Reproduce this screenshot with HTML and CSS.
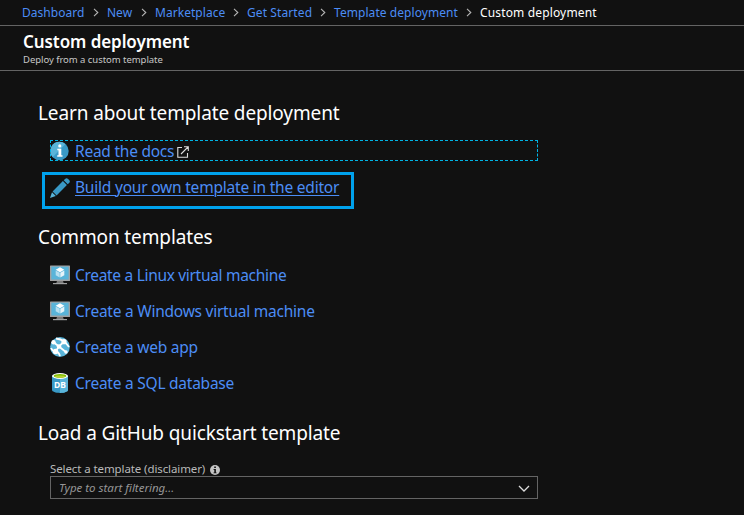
FILE: index.html
```html
<!DOCTYPE html>
<html lang="en">
<head>
<meta charset="utf-8">
<title>Custom deployment</title>
<link rel="stylesheet" href="styles.css">
</head>
<body>
<svg class="defs" width="0" height="0" aria-hidden="true">
  <symbol id="chev" viewBox="0 0 6 9"><path d="M1 .8 4.8 4.5 1 8.2" fill="none" stroke="#b4b4b4" stroke-width="1.1"/></symbol>
  <symbol id="vm" viewBox="0 0 20 20">
    <path d="M7 16h6l.7 2H6.300z" fill="#7a7a7a"/><path d="M3 18h14v1.200H3z" fill="#a0a1a2"/>
    <rect x="0" y="0.500" width="20" height="15.500" rx=".6" fill="#a0a1a2"/><rect x="1.400" y="1.700" width="17.200" height="12.800" fill="#59b4d9"/>
    <path d="M10 2.300 14.300 4.800 10 7.200 5.700 4.800z" fill="#fff"/><path d="M5.700 5.500 9.700 7.800v4.800L5.700 10.300z" fill="#b7dff0"/><path d="M14.300 5.500v4.800l-4 2.300V7.800z" fill="#e6f4fa"/>
  </symbol>
</svg>
<nav class="crumbs">
  <a class="c1">Dashboard</a><svg><use href="#chev"/></svg>
  <a class="c2">New</a><svg><use href="#chev"/></svg>
  <a class="c3">Marketplace</a><svg><use href="#chev"/></svg>
  <a class="c4">Get Started</a><svg><use href="#chev"/></svg>
  <a class="c5">Template deployment</a><svg><use href="#chev"/></svg>
  <span class="c6">Custom deployment</span>
</nav>
<header class="head">
  <h1>Custom deployment</h1>
  <p>Deploy from a custom template</p>
</header>
<main>
  <section class="learn">
    <h2>Learn about template deployment</h2>
    <div class="row focus">
      <svg class="ico" viewBox="0 0 20 20"><circle cx="9.500" cy="10" r="9.200" fill="#3999c6"/><path d="M9.500.8a9.200 9.200 0 0 0-6.800 15.400L15.500 3A9.200 9.200 0 0 0 9.500.8z" fill="#59b4d9"/><circle cx="9.800" cy="4.900" r="1.600" fill="#fff"/><path d="M7.300 7.800h4v6.500h1.200v1.500H7.200v-1.500h1.300V9.300H7.300z" fill="#fff"/></svg>
      <a>Read the docs</a>
      <svg class="ext" viewBox="0 0 12 12"><path d="M5 1.500H.8v9.800H10.500V7M7 .8h4.300V5M11 1 4 8" fill="none" stroke="#ddd" stroke-width="1.100"/></svg>
    </div>
    <div class="row marked">
      <svg class="ico" viewBox="0 0 20 20"><path d="M0 20 2 14.200 5.800 18z" fill="#59b4d9"/><path d="M2.600 13.400 12.900 3.100l4 4L6.600 17.400z" fill="#3999c6"/><path d="m13.700 2.300 1.400-1.400q1.400-1.400 3 0l1 1q1.500 1.500 0 3l-1.400 1.400z" fill="#3999c6"/></svg>
      <a>Build your own template in the editor</a>
    </div>
  </section>
  <section class="common">
    <h2>Common templates</h2>
    <div class="row linux"><svg class="ico"><use href="#vm"/></svg><a>Create a Linux virtual machine</a></div>
    <div class="row"><svg class="ico"><use href="#vm"/></svg><a>Create a Windows virtual machine</a></div>
    <div class="row"><svg class="ico" viewBox="0 0 20 20"><circle cx="10" cy="10" r="9.900" fill="#59b4d9"/><g fill="none" stroke="#fff" stroke-width="1.800"><path d="M2.500 4.500 9 9.500 14 4.500M9 9.500 5.500 14.500M9 9.500l7.500 6"/><path d="M6 1.500Q11 2 14 4.500T19 10M1 11q1 3 4.500 3.500T10 19"/></g><g fill="#fff"><circle cx="9" cy="9.500" r="2.300"/><circle cx="14" cy="4.700" r="2.600"/><circle cx="5.500" cy="14.500" r="2.700"/><circle cx="16" cy="15" r="1.700"/><circle cx="3.500" cy="5.200" r="2.200"/></g></svg><a>Create a web app</a></div>
    <div class="row"><svg class="ico" viewBox="0 0 20 20"><path d="M2 3v14c0 1.600 3.600 2.900 8 2.900s8-1.300 8-2.900V3z" fill="#3999c6"/><path d="M10 3h8v14c0 1.600-3.600 2.900-8 2.900z" fill="#59b4d9"/><ellipse cx="10" cy="3" rx="8" ry="2.900" fill="#fff"/><ellipse cx="10" cy="2.900" rx="6.300" ry="1.900" fill="#7fba00"/><ellipse cx="10" cy="3.500" rx="4.800" ry="1.100" fill="#b8d432"/><text x="10" y="15" text-anchor="middle" class="db">DB</text></svg><a>Create a SQL database</a></div>
  </section>
  <section class="load">
    <h2>Load a GitHub quickstart template</h2>
    <div class="label"><span>Select a template (disclaimer)</span><svg viewBox="0 0 10 10"><circle cx="5" cy="5" r="5" fill="#c3c3c3"/><path d="M4.200 1.600h1.700v1.500H4.200zM3.600 4h2.300v3.400h.7v.9H3.500v-.9h.8V4.900h-.7z" fill="#111"/></svg></div>
    <div class="select"><span>Type to start filtering...</span><svg viewBox="0 0 12 8"><path d="m1 1 5 5 5-5" fill="none" stroke="#ddd" stroke-width="1.300"/></svg></div>
  </section>
</main>
</body>
</html>
```
FILE: styles.css
```css
* { box-sizing: border-box; }
body { margin: 0; width: 744px; height: 515px; overflow: hidden; background: #111; color: #fff; font-family: "Noto Sans", "Open Sans", sans-serif; white-space: nowrap; }
.defs { display: block; }
a { color: #4c8df5; }
.crumbs { display: flex; align-items: center; height: 26px; padding-left: 22px; border-bottom: 1px solid #646464; font-size: 12px; line-height: 24px; }
.crumbs svg { width: 6px; height: 9px; margin: 0 8px; flex: none; }
.c1 { width: 63px; letter-spacing: .03px; }
.c2 { width: 26px; letter-spacing: 0; }
.c3 { width: 70px; letter-spacing: .04px; }
.c4 { width: 65px; letter-spacing: .1px; }
.c5 { width: 124px; letter-spacing: .06px; }
.c6 { letter-spacing: .15px; }
.head { height: 45px; padding: 4px 0 0 23px; border-bottom: 1px solid #646464; }
h1 { margin: 0; font-size: 17px; line-height: 24px; font-weight: 600; letter-spacing: -.08px; }
.head p { margin: 0; font-size: 9.500px; line-height: 11px; letter-spacing: -.04px; color: #c8c8c8; }
main { padding-left: 38px; }
h2 { margin: 0; font-size: 19px; line-height: 28px; font-weight: 400; letter-spacing: -.12px; }
.row { display: flex; align-items: center; width: 488px; height: 22px; margin: 0 0 14px 12px; font-size: 15.500px; line-height: 22px; letter-spacing: -.24px; }
.linux { letter-spacing: -.31px; }
.ico { width: 20px; height: 20px; margin-right: 5px; flex: none; }
.learn { padding-top: 28px; height: 152px; }
.learn h2 { margin-bottom: 13px; }
.focus { height: 21px; margin-bottom: 11px; outline: 1px dashed #00b4e6; outline-offset: -1px; }
.ext { width: 12px; height: 12px; margin: 2px 0 0 3px; }
.marked { width: 312px; height: 37px; margin: 0 0 0 4px; padding: 0 0 5px 5px; border: 3px solid #00a2ed; letter-spacing: -.21px; }
.marked a { margin-bottom: 2px; text-decoration: underline; text-underline-offset: 2px; text-decoration-thickness: 1px; }
.common h2 { margin-bottom: 13px; }
.db { fill: #fff; font-size: 8.500px; font-weight: 700; letter-spacing: 0; }
.load { padding-top: 11px; }
.load h2 { margin-bottom: 14px; }
.label { display: flex; align-items: center; height: 15px; margin-left: 12px; font-size: 11.500px; letter-spacing: -.1px; color: #b9b9b9; }
.label svg { width: 10px; height: 10px; margin: 2px 0 0 5px; }
.select { display: flex; align-items: center; justify-content: space-between; width: 488px; height: 23px; margin-left: 12px; padding: 0 7px 0 8px; border: 1px solid #646464; font-size: 11.500px; font-style: italic; color: #969696; }
.select svg { width: 12px; height: 8px; margin-top: 2px; }
```
